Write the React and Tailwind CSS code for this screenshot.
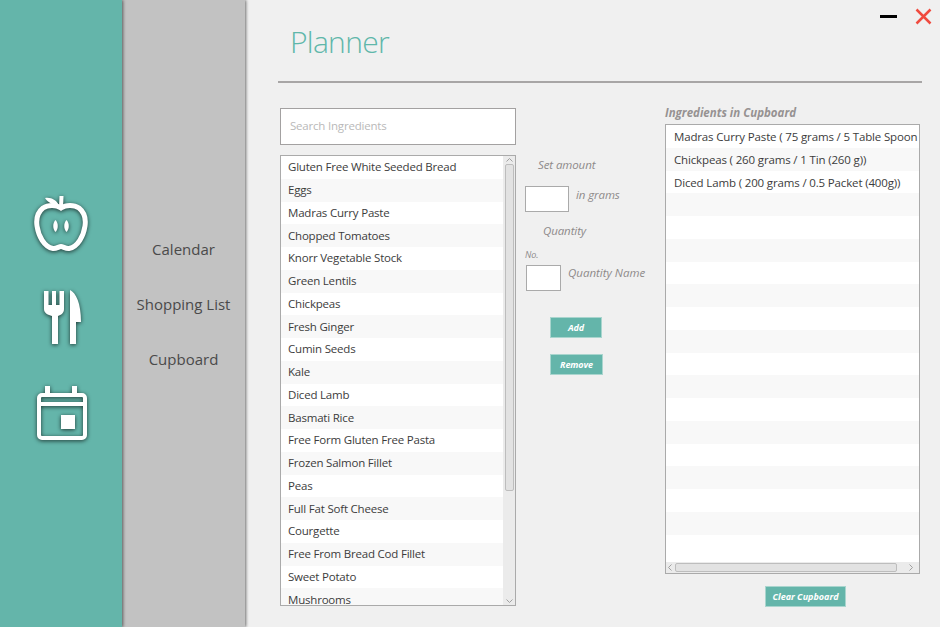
import React from 'react';

const ingredients = [
  'Gluten Free White Seeded Bread', 'Eggs', 'Madras Curry Paste', 'Chopped Tomatoes',
  'Knorr Vegetable Stock', 'Green Lentils', 'Chickpeas', 'Fresh Ginger', 'Cumin Seeds',
  'Kale', 'Diced Lamb', 'Basmati Rice', 'Free Form Gluten Free Pasta', 'Frozen Salmon Fillet',
  'Peas', 'Full Fat Soft Cheese', 'Courgette', 'Free From Bread Cod Fillet', 'Sweet Potato',
  'Mushrooms',
];

const cupboard = [
  'Madras Curry Paste ( 75 grams / 5 Table Spoon',
  'Chickpeas ( 260 grams / 1 Tin (260 g))',
  'Diced Lamb ( 200 grams / 0.5 Packet (400g))',
  '', '', '', '', '', '', '', '', '', '', '', '', '', '', '', '',
];

const AppleIcon = () => (
  <svg width="56" height="58" viewBox="0 0 56 58" fill="none" className="drop-shadow-[0_1px_2px_rgba(0,0,0,0.7)]">
    <path d="M28 13C23 9.500 15 9.500 10 13C5 17 3 24 4 31C5.500 41 11 52 20 53.500C23 54 26 51.500 28 51.500C30 51.500 33 54 36 53.500C45 52 50.500 41 52 31C53 24 51 17 46 13C41 9.500 33 9.500 28 13Z" stroke="white" strokeWidth="5" />
    <path d="M28 13L28.500 1" stroke="white" strokeWidth="4" />
    <path d="M26 11C21 10 15 8 12 3C18 2 24 5 26 11Z" fill="white" />
    <path d="M22.500 25C25.500 28 25.500 34 22.500 37C19.500 34 19.500 28 22.500 25Z" fill="white" />
    <path d="M33.500 25C36.500 28 36.500 34 33.500 37C30.500 34 30.500 28 33.500 25Z" fill="white" />
  </svg>
);

const CutleryIcon = () => (
  <svg width="40" height="56" viewBox="0 0 40 56" fill="white" className="drop-shadow-[0_1px_2px_rgba(0,0,0,0.7)]">
    <path d="M1 2H5.500V16H9V2H13V16H16.500V2H21V20C21 24 18 26 15 27V55H9V27C5 26 1 24 1 20Z" />
    <path d="M27 1C33 4 38 14 38 33H33V55H27Z" />
  </svg>
);

const CalendarIcon = () => (
  <svg width="50" height="54" viewBox="0 0 50 54" fill="none" className="drop-shadow-[0_1px_2px_rgba(0,0,0,0.7)]">
    <rect x="2" y="9" width="46" height="43" rx="3" stroke="white" strokeWidth="4" />
    <path d="M2 18H48" stroke="white" strokeWidth="4" />
    <path d="M10.500 0V8M37.500 0V8" stroke="white" strokeWidth="5" />
    <rect x="24" y="29" width="14" height="14" fill="white" />
  </svg>
);

const ListRow = ({ text, index, pad }) => (
  <div className={`h-[22.75px] shrink-0 whitespace-nowrap overflow-hidden flex items-center ${index % 2 === 1 ? 'bg-[#f8f8f8]' : 'bg-white'}`}>
    <span className={pad}>{text}</span>
  </div>
);

const TealButton = ({ children, className }) => (
  <button className={`bg-[#64b5aa] border border-[#a9d5ce] text-white italic font-bold text-[9px] font-['Open_Sans',sans-serif] ${className}`}>
    {children}
  </button>
);

export default function App() {
  return (
    <div className="w-[940px] h-[627px] flex overflow-hidden bg-[#f0f0f0] text-[#3c3c3c] font-['Open_Sans',sans-serif]">
      <div className="w-[122px] shrink-0 bg-[#64b5aa] flex flex-col items-center pt-[195px] z-20 shadow-[1px_0_3px_rgba(0,0,0,0.55)]">
        <AppleIcon />
        <div className="mt-[36px] ml-[3px]"><CutleryIcon /></div>
        <div className="mt-[41px] ml-[1px]"><CalendarIcon /></div>
      </div>
      <div className="w-[123px] shrink-0 bg-[#c2c2c2] flex flex-col items-center pt-[238px] gap-[33px] text-[15px] leading-[22px] text-[#4a4a4a] z-10 shadow-[1px_0_3px_rgba(0,0,0,0.55)]">
        <span>Calendar</span>
        <span>Shopping List</span>
        <span>Cupboard</span>
      </div>

      <main className="relative flex-1 pl-[33px] pr-[18px]">
        <div className="absolute top-[15px] right-[43px] w-[17px] h-[3px] bg-black" />
        <svg className="absolute top-[8px] right-[8px]" width="17" height="17" viewBox="0 0 17 17">
          <path d="M1.500 1.500L15.500 15.500M15.500 1.500L1.500 15.500" stroke="#f04b3f" strokeWidth="2.500" />
        </svg>

        <h1 className="h-[81px] pl-[12px] pt-[21px] text-[30px] leading-[42px] tracking-[-0.7px] font-light text-[#5fb7aa]">Planner</h1>
        <div className="h-[2px] bg-[#a8a6a6]" />

        <div className="flex mt-[25px]">
          <div className="w-[238px] shrink-0 pl-[2px]">
            <div className="h-[37px] border border-[#a3a1a1] bg-white flex items-center pl-[9px] pb-[2px] text-[11.500px] tracking-[-0.2px] text-[#b9b9b9]">
              Search Ingredients
            </div>
            <div className="mt-[10px] h-[451px] border border-[#aaa] bg-white flex overflow-hidden">
              <div className="flex-1 flex flex-col overflow-hidden text-[11.500px] tracking-[-0.2px]">
                {ingredients.map((name, i) => (
                  <ListRow key={name} text={name} index={i} pad="pl-[7px] pb-[1px]" />
                ))}
              </div>
              <div className="w-[12px] shrink-0 bg-[#ebebeb] flex flex-col items-center">
                <svg width="9" height="8" viewBox="0 0 9 8" className="shrink-0"><path d="M1.500 5.500L4.500 2.500L7.500 5.500" stroke="#a0a0a0" fill="none" /></svg>
                <div className="w-[9px] h-[327px] bg-[#e2e2e2] border border-[#bdbdbd] rounded-[2px]" />
                <div className="flex-1" />
                <svg width="9" height="8" viewBox="0 0 9 8" className="shrink-0"><path d="M1.500 2.500L4.500 5.500L7.500 2.500" stroke="#a0a0a0" fill="none" /></svg>
              </div>
            </div>
          </div>

          <div className="w-[149px] shrink-0 italic text-[#8e8a8a] text-[11.500px] tracking-[-0.1px] leading-[16px] pt-[49px]">
            <div className="pl-[22px]">Set amount</div>
            <div className="flex mt-[13px] pl-[9px]">
              <div className="w-[44px] h-[26px] border border-[#aaa] bg-white" />
              <span className="ml-[7px] mt-[1px]">in grams</span>
            </div>
            <div className="pl-[27px] mt-[11px]">Quantity</div>
            <div className="pl-[9px] mt-[10px] text-[9px] leading-[12px]">No.</div>
            <div className="flex pl-[10px] mt-[4px]">
              <div className="w-[35px] h-[26px] border border-[#aaa] bg-white" />
              <span className="ml-[7px] tracking-[0px]">Quantity Name</span>
            </div>
            <TealButton className="block ml-[34px] mt-[26px] w-[52px] h-[21px]">Add</TealButton>
            <TealButton className="block ml-[34px] mt-[16px] w-[53px] h-[21px]">Remove</TealButton>
          </div>

          <div className="w-[255px] shrink-0 -mt-[3px]">
            <div className="h-[19px] text-[11.500px] leading-[16px] italic font-bold text-[#969292]">Ingredients in Cupboard</div>
            <div className="h-[450px] border border-[#aaa] bg-white flex flex-col overflow-hidden">
              <div className="flex-1 flex flex-col overflow-hidden text-[11.500px] tracking-[-0.15px]">
                {cupboard.map((name, i) => (
                  <ListRow key={i} text={name} index={i} pad="pl-[8px] pt-[1px]" />
                ))}
              </div>
              <div className="h-[11px] shrink-0 bg-[#ebebeb] flex items-center">
                <svg width="9" height="9" viewBox="0 0 9 9" className="shrink-0"><path d="M5.500 1.500L2.500 4.500L5.500 7.500" stroke="#a0a0a0" fill="none" /></svg>
                <div className="w-[222px] h-[9px] bg-[#e2e2e2] border border-[#bdbdbd] rounded-[2px]" />
                <div className="flex-1" />
                <svg width="9" height="9" viewBox="0 0 9 9" className="shrink-0 mr-[4px]"><path d="M3.500 1.500L6.500 4.500L3.500 7.500" stroke="#a0a0a0" fill="none" /></svg>
              </div>
            </div>
            <TealButton className="block ml-[100px] mt-[12px] w-[81px] h-[21px]">Clear Cupboard</TealButton>
          </div>
        </div>
      </main>
    </div>
  );
}
